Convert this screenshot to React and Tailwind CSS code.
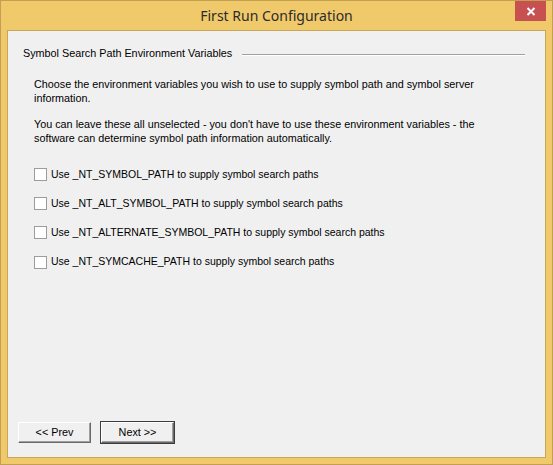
import { useState } from "react";

const VARS = [
  "_NT_SYMBOL_PATH",
  "_NT_ALT_SYMBOL_PATH",
  "_NT_ALTERNATE_SYMBOL_PATH",
  "_NT_SYMCACHE_PATH",
];

function Check({ label, checked, onChange }) {
  return (
    <label className="flex items-center h-[13px] cursor-default select-none">
      <span className="w-[13px] h-[13px] border border-[#9c9c9c] bg-white flex items-center justify-center">
        {checked && (
          <svg width="9" height="9" viewBox="0 0 9 9">
            <path d="M1 4.5l2.5 2.5L8 1.5" stroke="#000" strokeWidth="1.6" fill="none" />
          </svg>
        )}
      </span>
      <input type="checkbox" className="hidden" checked={checked} onChange={onChange} />
      <span className="ml-[4px] text-[10.5px]">Use {label} to supply symbol search paths</span>
    </label>
  );
}

function Button({ children, isDefault }) {
  return (
    <button
      className={
        "w-[75px] h-[23px] bg-[#f0f0f0] text-black " +
        (isDefault ? "border border-[#3c3c3c]" : "border border-[#f0f0f0]")
      }
    >
      <span className="flex h-full w-full items-center justify-center border-t border-l border-t-white border-l-white border-r border-b border-r-[#696969] border-b-[#696969] shadow-[inset_-1px_-1px_0_#a0a0a0]">
        {children}
      </span>
    </button>
  );
}

export default function App() {
  const [checked, setChecked] = useState([false, false, false, false]);

  const toggle = (i) => {
    const next = [...checked];
    next[i] = !next[i];
    setChecked(next);
  };

  return (
    <div
      className="w-[553px] h-[465px] flex flex-col border border-[#c39f52] bg-[#f0c96b] px-[6px] pb-[6px] text-[10.8px] text-black"
      style={{ fontFamily: '"Liberation Sans", Arial, sans-serif' }}
    >
      {/* Title bar */}
      <div className="h-[29px] relative flex items-center justify-center">
        <span
          className="text-[14px] text-[#2b2b2b]"
          style={{ fontFamily: '"Noto Sans", "Open Sans", sans-serif' }}
        >
          First Run Configuration
        </span>
        <button className="absolute top-0 right-[0px] w-[31px] h-[20px] bg-[#c75050] flex items-center justify-center">
          <svg width="10" height="9" viewBox="0 0 10 9">
            <path d="M1.5 1l7 7M8.5 1l-7 7" stroke="#fff" strokeWidth="2" />
          </svg>
        </button>
      </div>

      {/* Client area */}
      <div className="flex-1 flex flex-col border border-[#c8a759] bg-[#f0f0f0]">
        <div className="flex items-center pl-[15px] pr-[20px] pt-[16px]">
          <span className="leading-[13px]">Symbol Search Path Environment Variables</span>
          <div className="flex-1 ml-[10px] mt-[2px] border-t border-b border-t-[#a0a0a0] border-b-white" />
        </div>

        <div className="pl-[26px] pt-[17px] leading-[14px]">
          <p>
            Choose the environment variables you wish to use to supply symbol path and symbol server
            <br />
            information.
          </p>
          <p className="mt-[12px]">
            You can leave these all unselected - you don't have to use these environment variables - the
            <br />
            software can determine symbol path information automatically.
          </p>
        </div>

        <div className="pl-[26px] pt-[23px] flex flex-col gap-[16.2px]">
          {VARS.map((v, i) => (
            <Check key={v} label={v} checked={checked[i]} onChange={() => toggle(i)} />
          ))}
        </div>

        <div className="mt-auto flex gap-[8px] pl-[9px] pb-[13px]">
          <Button>&lt;&lt; Prev</Button>
          <Button isDefault>Next &gt;&gt;</Button>
        </div>
      </div>
    </div>
  );
}
